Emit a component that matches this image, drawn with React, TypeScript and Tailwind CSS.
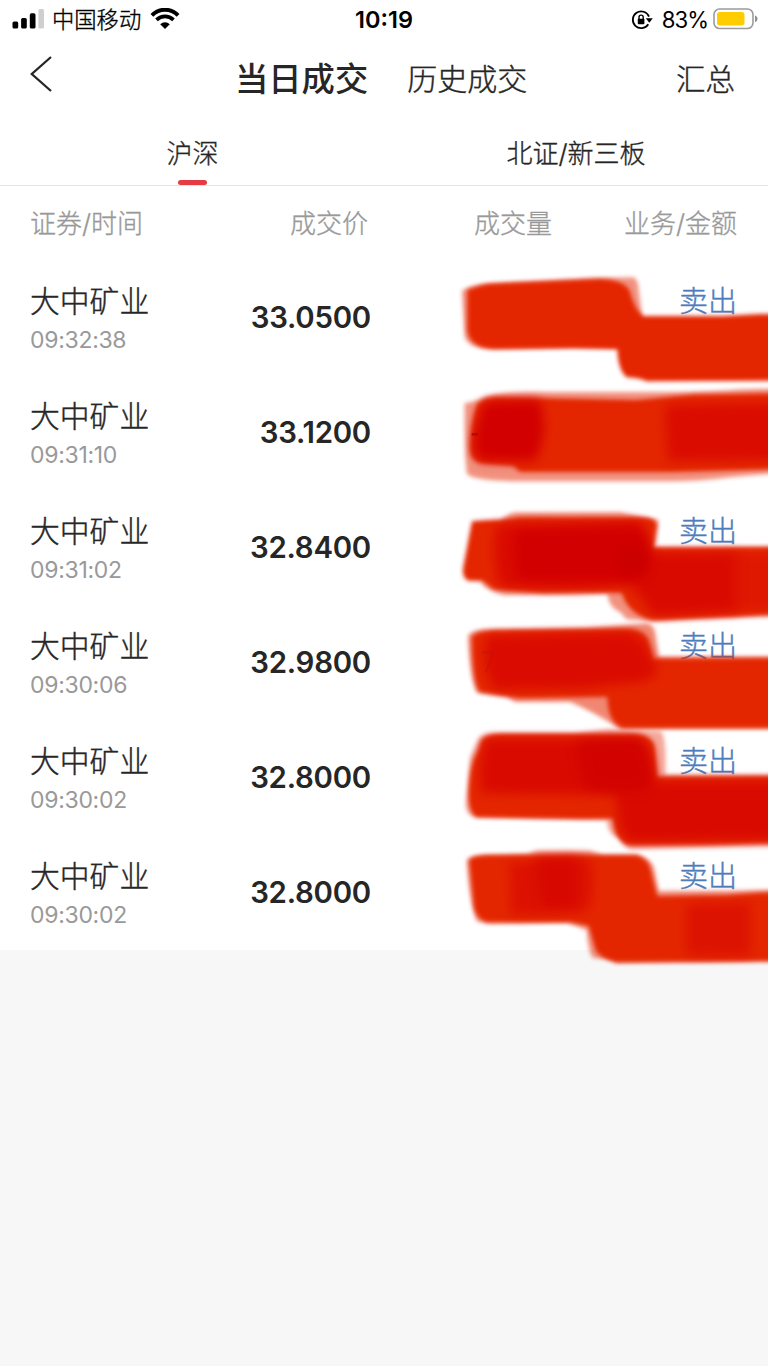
import React from "react";

type Trade = { name: string; time: string; price: string; side: string };

const trades: Trade[] = [
  { name: "大中矿业", time: "09:32:38", price: "33.0500", side: "卖出" },
  { name: "大中矿业", time: "09:31:10", price: "33.1200", side: "" },
  { name: "大中矿业", time: "09:31:02", price: "32.8400", side: "卖出" },
  { name: "大中矿业", time: "09:30:06", price: "32.9800", side: "卖出" },
  { name: "大中矿业", time: "09:30:02", price: "32.8000", side: "卖出" },
  { name: "大中矿业", time: "09:30:02", price: "32.8000", side: "卖出" },
];

function StatusBar() {
  return (
    <div className="flex h-10 items-center justify-between pl-3 pr-[10px] text-black">
      <div className="flex w-[300px] items-center">
        <svg className="mb-0.5 h-5 w-8 shrink-0" viewBox="0 0 32 20">
          <rect x="0.5" y="12.5" width="5.7" height="7" rx="1.6" />
          <rect x="9.1" y="9" width="5.7" height="10.5" rx="1.6" />
          <rect x="17.8" y="4.3" width="5.7" height="15.2" rx="1.6" />
          <rect x="26.4" y="0" width="5.6" height="19.5" rx="1.6" fill="#cfcfcf" />
        </svg>
        <span className="ml-[8px] text-[22.3px] leading-10 font-light [-webkit-text-stroke:0.35px]">中国移动</span>
        <svg className="mb-0.5 ml-[9px] h-[22px] w-[30px]" viewBox="0 0 30 22">
          <path d="M1.9 7.3C9.4-.2 20.6-.2 28.1 7.3" fill="none" stroke="#000" strokeWidth="3.9" />
          <path d="M6.5 11.9C11.4 7.2 18.6 7.2 23.5 11.9" fill="none" stroke="#000" strokeWidth="3.7" />
          <path d="M10.2 16.2C13 13.5 17 13.5 19.8 16.2L15 21Z" />
        </svg>
      </div>
      <span className="mr-[2px] text-[23.5px] leading-10 font-semibold">10:19</span>
      <div className="flex w-[300px] items-center justify-end">
        <svg className="mr-[9px] h-[22px] w-[22px]" viewBox="0 0 22 22">
          <path d="M17.3 15.3A8.4 8.4 0 1 1 18 7.6" fill="none" stroke="#000" strokeWidth="1.8" />
          <path d="M14.8 9.2H21.8L18.3 13.7Z" />
          <rect x="6.8" y="9.7" width="6.6" height="5.6" rx="0.8" />
          <path d="M8 10.2V8.2a2.1 2.1 0 0 1 4.2 0V10.2" fill="none" stroke="#000" strokeWidth="1.4" />
        </svg>
        <span className="text-[22.2px] leading-10 tracking-[-1px]">83%</span>
        <svg className="mb-0.5 ml-[5px] h-[22px] w-[45px]" viewBox="0 0 45 22">
          <rect x="1" y="1" width="39" height="19.5" rx="5.5" fill="#fff" stroke="#9b9b9b" strokeWidth="1.6" />
          <rect x="4" y="4" width="27.5" height="13.5" rx="3" fill="#ffcc00" />
          <path d="M42 7.3Q44.6 8.3 44.6 10.8T42 14.3Z" fill="#8f8f8f" />
        </svg>
      </div>
    </div>
  );
}

function Redactions() {
  return (
    <svg
      className="pointer-events-none absolute left-[440px] top-[260px] h-[720px] w-[328px]"
      viewBox="0 0 984 2160"
    >
      <defs>
        <filter id="halo" x="-10%" y="-20%" width="120%" height="140%">
          <feGaussianBlur stdDeviation="6" />
        </filter>
        <filter id="edge" x="-10%" y="-20%" width="120%" height="140%">
          <feGaussianBlur stdDeviation="7" />
        </filter>
        <filter id="soft" x="-20%" y="-30%" width="140%" height="160%" colorInterpolationFilters="sRGB">
          <feGaussianBlur stdDeviation="16" />
        </filter>
      </defs>

      <g fill="#e42603">
        <path filter="url(#halo)" opacity=".5" d="M66 92Q90 76 135 72L470 54L580 52Q594 56 596 90L606 164L560 260L160 266Q85 266 74 230Z" />
        <path filter="url(#edge)" d="M82 90Q130 72 150 71L480 57Q550 60 568 90Q588 160 612 168L850 168L960 162L1050 162V362L620 364Q600 354 560 352Q534 330 532 268L400 264L160 267Q88 262 82 210Z" />
      </g>

      <g fill="#e42603">
        <path filter="url(#halo)" opacity=".5" d="M74 430Q110 424 130 412Q160 398 260 396L560 396Q780 398 900 388L1050 384V636L870 652Q780 664 700 664L210 664Q90 660 80 640L76 590L74 490Z" />
        <path filter="url(#edge)" d="M112 432Q136 410 180 412L590 420L760 404L1050 400V626L700 636L240 636L220 618L120 610Q88 600 90 560Q94 470 112 432Z" />
        <path filter="url(#soft)" fill="#d20000" d="M130 428Q230 418 300 422Q330 520 284 602L130 602Q94 590 104 520Z" />
        <path filter="url(#soft)" fill="#da0c00" d="M676 434L1050 430V600L684 602Z" />
        <path d="M95 523H114" stroke="#a60b06" strokeWidth="8" opacity=".8" />
      </g>

      <g transform="translate(0 690)" fill="#e42603">
        <path filter="url(#halo)" opacity=".5" d="M184 88Q210 68 230 67L540 67L610 82L656 90L648 150L640 172H1050V376L740 388L640 394L560 388L540 366Q506 354 502 310L410 314L190 314Q136 300 124 280Z" />
        <path filter="url(#edge)" d="M96 94Q140 88 190 90L240 82L616 83Q650 86 650 106L638 174L1050 172V370L860 380L640 390Q566 376 545 308L410 306L310 308L160 298L130 274L84 272Q64 260 70 230Z" />
        <path filter="url(#soft)" fill="#da0b00" d="M170 104L596 94Q632 120 630 210L610 280L400 296L180 290Q150 190 170 104Z" />
        <path filter="url(#soft)" fill="#df1802" d="M880 190H1050V356L880 362Z" />
        <path filter="url(#soft)" fill="#d90a00" d="M600 190L890 188V364L640 376L580 290Z" />
        <path filter="url(#soft)" fill="#d20000" d="M225 120L590 112Q626 140 626 210L610 260Q590 280 540 270L240 270Q216 200 225 120Z" />
        <circle filter="url(#soft)" fill="#ca0000" opacity=".7" cx="582" cy="210" r="48" />
      </g>

      <g transform="translate(0 690)" fill="#e42603">
        <path filter="url(#halo)" opacity=".55" d="M84 440Q90 420 140 418L440 414L620 400Q642 404 646 430L656 500H1050V716L540 716Q450 660 390 636L225 636L200 620L110 608Q88 560 84 440Z" />
        <path filter="url(#edge)" d="M96 440Q110 424 160 422L570 417Q624 424 628 460L640 506L1050 504V714L550 714Q504 700 502 620L240 624L120 606Q98 580 96 440Z" />
        <path filter="url(#soft)" fill="#da0b00" d="M140 438L560 428Q622 445 628 500L652 530Q650 570 590 576L430 594L160 598Q120 520 140 438Z" />
        <path d="M126 487H160L138 546" fill="none" stroke="#bd1208" strokeWidth="5" opacity=".5" />
      </g>

      <g transform="translate(0 1380)" fill="#e42603">
        <path filter="url(#halo)" opacity=".4" d="M112 64Q116 42 160 40L400 40L500 28L664 34Q680 60 676 166H1050V378L800 382L570 388Q550 380 540 352Q504 350 500 300L100 290Q72 280 78 240L90 110Z" />
        <path filter="url(#edge)" d="M124 62Q134 44 180 42L590 42Q644 48 646 90L652 170L1050 168V368L800 374L570 376Q524 366 518 296L420 297L110 292Q82 276 86 210Q90 130 112 96Z" />
        <path filter="url(#soft)" fill="#d90a00" d="M140 56L590 56Q634 80 640 184H1050V358L570 364Q534 346 528 224L125 220Q110 140 140 56Z" />
        <path filter="url(#soft)" fill="#cf0000" opacity=".7" d="M410 66Q500 48 600 58Q636 82 638 190Q610 220 540 216L440 206Q416 140 410 66Z" />
      </g>

      <g transform="translate(0 1380)" fill="#e42603">
        <path filter="url(#halo)" opacity=".5" d="M80 420Q90 404 150 404L260 402L290 392L450 392L490 404L590 404Q638 416 644 450L656 512H850L1050 508V724L530 730L506 718L460 714Q444 700 440 630L380 608L150 612L110 604Q86 540 80 420Z" />
        <path filter="url(#edge)" d="M88 422Q96 407 150 406L590 406Q626 418 632 450L652 528L860 526L960 518L1050 516V722L530 726Q470 712 464 680L446 618L390 606L140 606Q108 596 102 560Z" />
        <path filter="url(#soft)" fill="#dc1101" d="M210 428L448 414Q474 490 440 574L215 586Z" />
        <path filter="url(#soft)" fill="#d50500" d="M285 412L410 410V560L310 562Z" opacity=".7" />
        <path filter="url(#soft)" fill="#dc1301" d="M740 552L930 548V706L740 704Z" />
      </g>
    </svg>
  );
}

export default function App() {
  return (
    <main className="relative h-[1366px] w-[768px] overflow-hidden bg-[#f7f7f7] font-['Inter','Noto_Sans_CJK_SC',sans-serif] text-[#262626]">
      <div className="h-[950px] bg-white">
        <StatusBar />
        <nav className="flex h-[76px] items-center pl-[30px] pr-[33px] pt-[2px]">
          <svg className="mb-[10px] h-[38px] w-[22px]" viewBox="0 0 22 38" fill="none" stroke="#262626" strokeWidth="2.3">
            <path d="M21 2L1.8 19L21 36" />
          </svg>
          <span className="ml-[183px] text-[33.3px] leading-[50px] font-medium">当日成交</span>
          <span className="ml-[39px] text-[30px] leading-[50px] font-light [-webkit-text-stroke:0.4px]">历史成交</span>
          <span className="ml-auto text-[29.5px] leading-[50px] font-light [-webkit-text-stroke:0.4px]">汇总</span>
        </nav>
        <div className="grid h-[70px] grid-cols-2 border-b border-[#e4e4e4] text-[26px] font-light [-webkit-text-stroke:0.35px]">
          <div className="flex flex-col items-center justify-between pl-[1px]">
            <span className="pt-[17px] leading-[42px]">沪深</span>
            <span className="h-[5px] w-[29px] rounded-full bg-[#e63b42]" />
          </div>
          <div className="flex justify-center pt-[17px] leading-[42px]">
            <span>北证/新三板</span>
          </div>
        </div>
        <div className="flex h-[74px] items-center pl-[30px] pr-[31px] pt-px text-[26px] font-light text-[#999] [-webkit-text-stroke:0.35px]">
          <span className="w-[180px]">证券/时间</span>
          <span className="w-[158px] text-right">成交价</span>
          <span className="w-[184px] text-right">成交量</span>
          <span className="ml-auto">业务/金额</span>
        </div>
        {trades.map((trade, index) => (
          <div key={index} className="flex h-[115px] pl-[30px] pr-[31px]">
            <div className="w-[180px] pt-[19px]">
              <div className="text-[29.8px] leading-[44px] font-light [-webkit-text-stroke:0.4px]">{trade.name}</div>
              <div className="pt-px text-[23px] leading-[32px] tracking-[-0.3px] text-[#999]">{trade.time}</div>
            </div>
            <div className="w-[161px] text-right text-[29.4px] leading-[115px] font-semibold tracking-[-0.25px]">
              {trade.price}
            </div>
            <div className="ml-auto pt-[20px] text-[29px] leading-[44px] font-light text-[#4d7dbd] [-webkit-text-stroke:0.4px]">
              {trade.side}
            </div>
          </div>
        ))}
      </div>
      <Redactions />
    </main>
  );
}
